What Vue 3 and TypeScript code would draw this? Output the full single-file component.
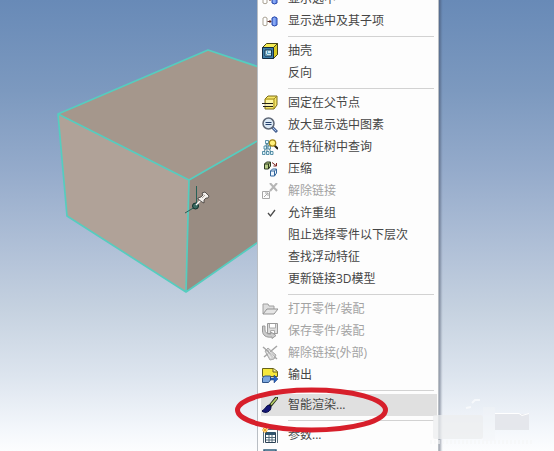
<script setup lang="ts">
type IconName =
  | 'show' | 'shell' | 'pin' | 'zoom' | 'tree' | 'compress' | 'unlink' | 'check'
  | 'open' | 'save' | 'external' | 'export' | 'brush' | 'table' | 'sheet'

interface Item {
  label: string
  icon?: IconName
  disabled?: boolean
  active?: boolean
}

const groups: Item[][] = [
  [
    { label: '显示选中', icon: 'show' },
    { label: '显示选中及其子项', icon: 'show' },
  ],
  [{ label: '抽壳', icon: 'shell' }, { label: '反向' }],
  [
    { label: '固定在父节点', icon: 'pin' },
    { label: '放大显示选中图素', icon: 'zoom' },
    { label: '在特征树中查询', icon: 'tree' },
    { label: '压缩', icon: 'compress' },
    { label: '解除链接', icon: 'unlink', disabled: true },
    { label: '允许重组', icon: 'check' },
    { label: '阻止选择零件以下层次' },
    { label: '查找浮动特征' },
    { label: '更新链接3D模型' },
  ],
  [
    { label: '打开零件/装配', icon: 'open', disabled: true },
    { label: '保存零件/装配', icon: 'save', disabled: true },
    { label: '解除链接(外部)', icon: 'external', disabled: true },
    { label: '输出', icon: 'export' },
  ],
  [{ label: '智能渲染...', icon: 'brush', active: true }],
  [{ label: '参数...', icon: 'table' }, { label: '', icon: 'sheet' }],
]
</script>

<template>
  <main class="viewport">
    <svg class="model" width="280" height="320" viewBox="0 0 280 320" aria-hidden="true">
      <polygon points="58,114 208,50 280,74 280,128 189,180" fill="#a5978c" />
      <polygon points="58,114 189,180 186,292 67,216" fill="#b0a298" />
      <polygon points="189,180 280,128 280,227 186,292" fill="#998c82" />
      <path
        d="M280 74 208 50 58 114 67 216 186 292 280 227M58 114 189 180 280 128M189 180 186 292"
        fill="none" stroke="#55cdbf" stroke-width="1.7" stroke-linejoin="round"
      />
      <path d="M196.500 186v20M185 213l10-6" fill="none" stroke="#286158" stroke-width="1" />
      <circle cx="195.500" cy="206" r="3" fill="#3b6b62" stroke="#102f2b" />
      <path d="M196 205l5-5" stroke="#fff" stroke-width="1.500" />
      <path
        d="M198 198l3-1 2-2-1-2 3-1 4 4-1 2-2 0-2 2 0 3-2-1-4-3z"
        fill="#f4f1ed" stroke="#3c3936" stroke-width=".8"
      />
      <path d="M202 198l3-3" stroke="#aaa29a" />
    </svg>

    <div class="watermark" aria-hidden="true">
      <svg width="118" height="52" viewBox="0 0 118 52">
        <path d="M36 9l5-1M42 4l3-3h5" fill="none" stroke="#fff" stroke-width="2" opacity=".6" />
        <rect x="3" y="16" width="50" height="24" rx="2" fill="#eceeef" opacity=".75" />
        <rect x="53" y="8" width="12" height="34" fill="#f2f4f7" opacity=".4" />
        <rect x="65" y="15" width="34" height="16" fill="#e3e6ea" opacity=".9" />
        <path d="M65 14.500h24l3 2 7-2" fill="none" stroke="#fff" />
        <path d="M0 43h102" stroke="#f6f7f8" stroke-width="4" stroke-dasharray="2 2" opacity=".6" />
      </svg>
    </div>

    <nav class="menu" aria-label="零件">
      <ul v-for="(group, g) in groups" :key="g" class="group">
        <li v-for="(item, i) in group" :key="i">
          <button class="item" :class="{ active: item.active }" :disabled="item.disabled" type="button">
            <svg class="icon" width="16" height="16" viewBox="0 0 16 16" fill="none" aria-hidden="true">
              <template v-if="item.icon === 'show'">
                <path d="M1 5q2-2 4 0v7q-2 1.500-4 0z" fill="#fff" stroke="#aaa395" />
                <path d="M5.500 8.500H9M7.500 7l1.500 1.500L7.500 10" stroke="#59251f" />
                <path d="M10 5q2.500-2.500 5 0v7q-2.500 2-5 0z" fill="#6e94ee" stroke="#2646a8" />
                <path d="M12 5v7" stroke="#a5bdf8" />
              </template>
              <template v-else-if="item.icon === 'shell'">
                <path d="M.500 4.500l4-4h11v11l-4 4z" fill="#f4ec55" stroke="#494716" />
                <path d="M11.500 4.500l4-4v11l-4 4z" fill="#d8ca22" stroke="#494716" />
                <path d="M.500 4.500h11v11H.500z" fill="#3d7da8" stroke="#112b42" />
                <path d="M3 7h6.500v6H3z" fill="#c9e9f5" stroke="#15364f" />
                <path d="M3.500 12.500l2-2h3.500M5.500 10.500V7.500" stroke="#5ba3c6" />
              </template>
              <template v-else-if="item.icon === 'pin'">
                <path d="M3 4l3-3h9v9l-3 4H3z" fill="#f7e767" stroke="#7b6a19" />
                <path d="M3 4h9v10M12 4l3-3" stroke="#9f8a22" />
                <path d="M4 5h7v3H4z" fill="#fff8a6" />
                <path d="M0 8.500h11M1 11.500h10" stroke="#242318" />
                <path d="M1 10h10" stroke="#fff" />
              </template>
              <template v-else-if="item.icon === 'zoom'">
                <path d="M10 10l5 5" stroke="#4a6494" stroke-width="3" />
                <path d="M11 11l3 3" stroke="#a9c6ef" />
                <circle cx="6.500" cy="6.500" r="5.500" fill="#dceaf6" stroke="#5d6675" stroke-width="1.500" />
                <path d="M3.500 5.500h6M3.500 7.500h6" stroke="#243f6c" />
              </template>
              <template v-else-if="item.icon === 'tree'">
                <path d="M5 3L2 14M5 3l4 11M5 3v11" stroke="#5c8798" />
                <g fill="#e4f6fc" stroke="#367895" stroke-width=".8">
                  <path d="M3.500 1.500h3v3h-3zM2 7h2.500v3H2zM6 7h2.500v3H6zM.500 12.500h2.500v3H.500zM4.500 12.500H7v3H4.500zM8.500 12.500H11v3H8.500z" />
                </g>
                <path d="M12 6l4 4" stroke="#24221d" stroke-width="2" />
                <circle cx="10.500" cy="4" r="3.200" fill="#fff17b" stroke="#a08317" stroke-width="1.300" />
              </template>
              <template v-else-if="item.icon === 'compress'">
                <path d="M2.500 3l2-2h4v4l-2 3h-4z" fill="#b8cd86" stroke="#2d3920" />
                <path d="M2.500 3h4v5M6.500 3l2-2" stroke="#2d3920" />
                <path d="M10 1.500l4 3M14.500 2v3h-3" stroke="#7e2722" />
                <path d="M8.500 10l2-2h4v4l-2 3h-4z" fill="#eef6ff" stroke="#34679d" />
                <path d="M8.500 10h4v5M12.500 10l2-2" stroke="#34679d" />
              </template>
              <template v-else-if="item.icon === 'unlink'">
                <path d="M8 0l7 8M15 0L8 8" stroke="#b5b5b5" stroke-width="2" />
                <path d="M.500 8.500h7v7h-7zM2 14l4-4M3 10h3v3" stroke="#a8a8a8" />
              </template>
              <template v-else-if="item.icon === 'check'">
                <path d="M6 8l2.500 3L13 5" stroke="#4b4b4b" stroke-width="1.300" />
              </template>
              <template v-else-if="item.icon === 'open'">
                <path d="M1 13V3h5l1 2h5v3" fill="#ddd" stroke="#a0a0a0" />
                <path d="M1 13l4-5h11l-4 5z" fill="#e5e5e5" stroke="#939393" />
              </template>
              <template v-else-if="item.icon === 'save'">
                <path d="M5.500 .500h10v10h-10z" fill="#ddd" stroke="#999" />
                <path d="M7.500 1v4h6V1M8.500 10V7.500h4V10" fill="#fff" stroke="#aaa" />
                <path d="M.500 3H3v4c0 2 2 4 4 4h2V9l5 3.500-4 3V14C4 15 .500 12 .500 8z" fill="#ccc" stroke="#999" />
              </template>
              <template v-else-if="item.icon === 'external'">
                <path d="M3 6l3-3 8 7-2 4-4 1z" fill="#d2d2d2" stroke="#aaa" />
                <path d="M1 2l14 12M15 1L2 12" stroke="#a5a5a5" stroke-width="1.500" />
                <path d="M5 7l4 6M7 6l5 6" stroke="#eee" />
              </template>
              <template v-else-if="item.icon === 'export'">
                <path d="M.500 1.500h11l4 3v5H.500z" fill="#f6e83c" stroke="#66611a" />
                <path d="M11 1.500v3.500h4" fill="#fff8b0" stroke="#66611a" />
                <path d="M.500 11l2-2h6v4l-2 2.500h-6z" fill="#7ba6dc" stroke="#2e5387" />
                <path d="M8.500 11H12V8l4 4-4 4v-3H8.500z" fill="#2763c0" stroke="#1c3d78" stroke-width=".5" />
              </template>
              <template v-else-if="item.icon === 'brush'">
                <path d="M14.500 1L8 9" stroke="#252b22" stroke-width="3.400" stroke-linecap="round" />
                <path d="M14.300 1.500L9.500 7" stroke="#b7cf67" stroke-width="1.700" stroke-linecap="round" />
                <path d="M7 8c-4 1-3 4-7 6 3 3 9 1 9-4z" fill="#151776" stroke="#080b48" />
              </template>
              <template v-else-if="item.icon === 'table'">
                <path d="M1.500 5v11M6 2.500h9.500V16" stroke="#596c7a" />
                <path d="M3.500 5.500h10v10h-10z" fill="#fff" stroke="#2c4255" />
                <path d="M4 5h9v3H4z" fill="#31546d" />
                <path d="M4 10.500h9M4 13h9M7 8v7M10 8v7" stroke="#536b7a" />
                <path d="M3 0v6M0 3h6M1 1l4 4M5 1L1 5" stroke="#f2a51d" />
              </template>
              <template v-else-if="item.icon === 'sheet'">
                <path d="M2 1h12v14H2z" fill="#e7f1f6" stroke="#315e7c" stroke-width="1.500" />
                <path d="M4 5h8M4 8h8" stroke="#6b899c" />
              </template>
            </svg>
            <span v-if="item.label">{{ item.label }}</span>
          </button>
        </li>
      </ul>
    </nav>

    <svg class="callout" width="156" height="52" viewBox="0 0 156 52" aria-hidden="true">
      <ellipse cx="77.500" cy="24" rx="74" ry="20" fill="none" stroke="#d71f2b" stroke-width="5" />
    </svg>
  </main>
</template>

<style>
body {
  margin: 0;
}
</style>

<style scoped>
.viewport {
  position: relative;
  height: 100vh;
  overflow: hidden;
  background: linear-gradient(#688ab7 0%, #7c99bf 20%, #95abcb 38%, #b0c0d7 55%, #c6d2e0 69%, #dce4ee 83%, #f5f8fc 96%, #fcfdfe 100%);
  font-family: "Open Sans", "Noto Sans CJK SC", sans-serif;
}

.model {
  position: absolute;
  top: 0;
  left: 0;
}

.menu {
  position: absolute;
  top: -12px;
  left: 257px;
  box-sizing: border-box;
  width: 182px;
  border: 1px solid #b9bec4;
  border-top: 0;
  background: #fdfdfd;
  box-shadow: 2px 1px 2px rgb(60 70 90 / 45%);
}

.group {
  margin: 0;
  padding: 0 1px 0 3px;
  list-style: none;
}

.group + .group::before {
  content: "";
  display: block;
  height: 1px;
  margin: 4px 3px 3px 27px;
  background: #d2d2d2;
}

.item {
  display: flex;
  align-items: center;
  gap: 10px;
  width: 100%;
  height: 22px;
  padding: 0 1px;
  border: 0;
  background: transparent;
  color: #454545;
  font: inherit;
  font-size: 12px;
  line-height: 22px;
  text-align: left;
  white-space: nowrap;
}

.item:disabled {
  color: #a3a3a3;
}

.item.active {
  background: #e0e0e0;
}

.icon {
  flex: none;
}

.watermark {
  position: absolute;
  right: 6px;
  bottom: 0;
  z-index: 1;
}

.watermark svg {
  display: block;
}

.callout {
  position: absolute;
  top: 386px;
  left: 234px;
  z-index: 2;
}
</style>
